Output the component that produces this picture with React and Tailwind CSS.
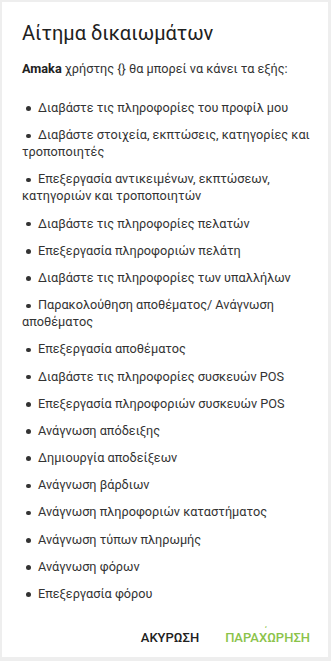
import React from 'react';

const permissions = [
  'Διαβάστε τις πληροφορίες του προφίλ μου',
  'Διαβάστε στοιχεία, εκπτώσεις, κατηγορίες και τροποποιητές',
  'Επεξεργασία αντικειμένων, εκπτώσεων, κατηγοριών και τροποποιητών',
  'Διαβάστε τις πληροφορίες πελατών',
  'Επεξεργασία πληροφοριών πελάτη',
  'Διαβάστε τις πληροφορίες των υπαλλήλων',
  'Παρακολούθηση αποθέματος/ Ανάγνωση αποθέματος',
  'Επεξεργασία αποθέματος',
  'Διαβάστε τις πληροφορίες συσκευών POS',
  'Επεξεργασία πληροφοριών συσκευών POS',
  'Ανάγνωση απόδειξης',
  'Δημιουργία αποδείξεων',
  'Ανάγνωση βάρδιων',
  'Ανάγνωση πληροφοριών καταστήματος',
  'Ανάγνωση τύπων πληρωμής',
  'Ανάγνωση φόρων',
  'Επεξεργασία φόρου',
];

export default function App() {
  return (
    <div
      className="w-[331px] h-[661px] bg-[#eeeeee] pt-[2px] pl-[2px] pr-[3px] pb-[4px]"
      style={{ fontFamily: 'Roboto, "Noto Sans", sans-serif' }}
    >
      <div className="h-full bg-white flex flex-col">
        <div className="pl-[20px] pr-[14px] pt-[19px]">
          <h1 className="text-[20px] leading-[24px] font-normal text-[#212121]">Αίτημα δικαιωμάτων</h1>
          <p className="mt-[15px] text-[12.7px] leading-[17px] text-[#333333]">
            <span className="font-bold text-[#212121]">Amaka</span> χρήστης {'{}'} θα μπορεί να κάνει τα εξής:
          </p>
          <ul className="mt-[22px] flex flex-col gap-[10.2px] text-[12.7px] leading-[17px] text-[#333333]">
            {permissions.map((p) => (
              <li key={p}>
                <span className="inline-block align-middle w-[4.5px] h-[4.5px] rounded-full bg-[#333333] ml-[4px] mr-[7.5px]" />
                {p}
              </li>
            ))}
          </ul>
        </div>
        <div className="mt-auto flex justify-end items-center gap-[26px] pr-[18px] pb-[10px]">
          <button className="text-[13px] font-medium text-[#212121] uppercase">Ακυρωση</button>
          <button className="text-[13px] font-medium text-[#8bc34a]">
            ΠΑΡΑΧ<span className="relative before:content-['΄'] before:absolute before:left-[-3px] before:top-[-6px] before:text-[10px]">Ω</span>ΡΗΣΗ
          </button>
        </div>
      </div>
    </div>
  );
}
